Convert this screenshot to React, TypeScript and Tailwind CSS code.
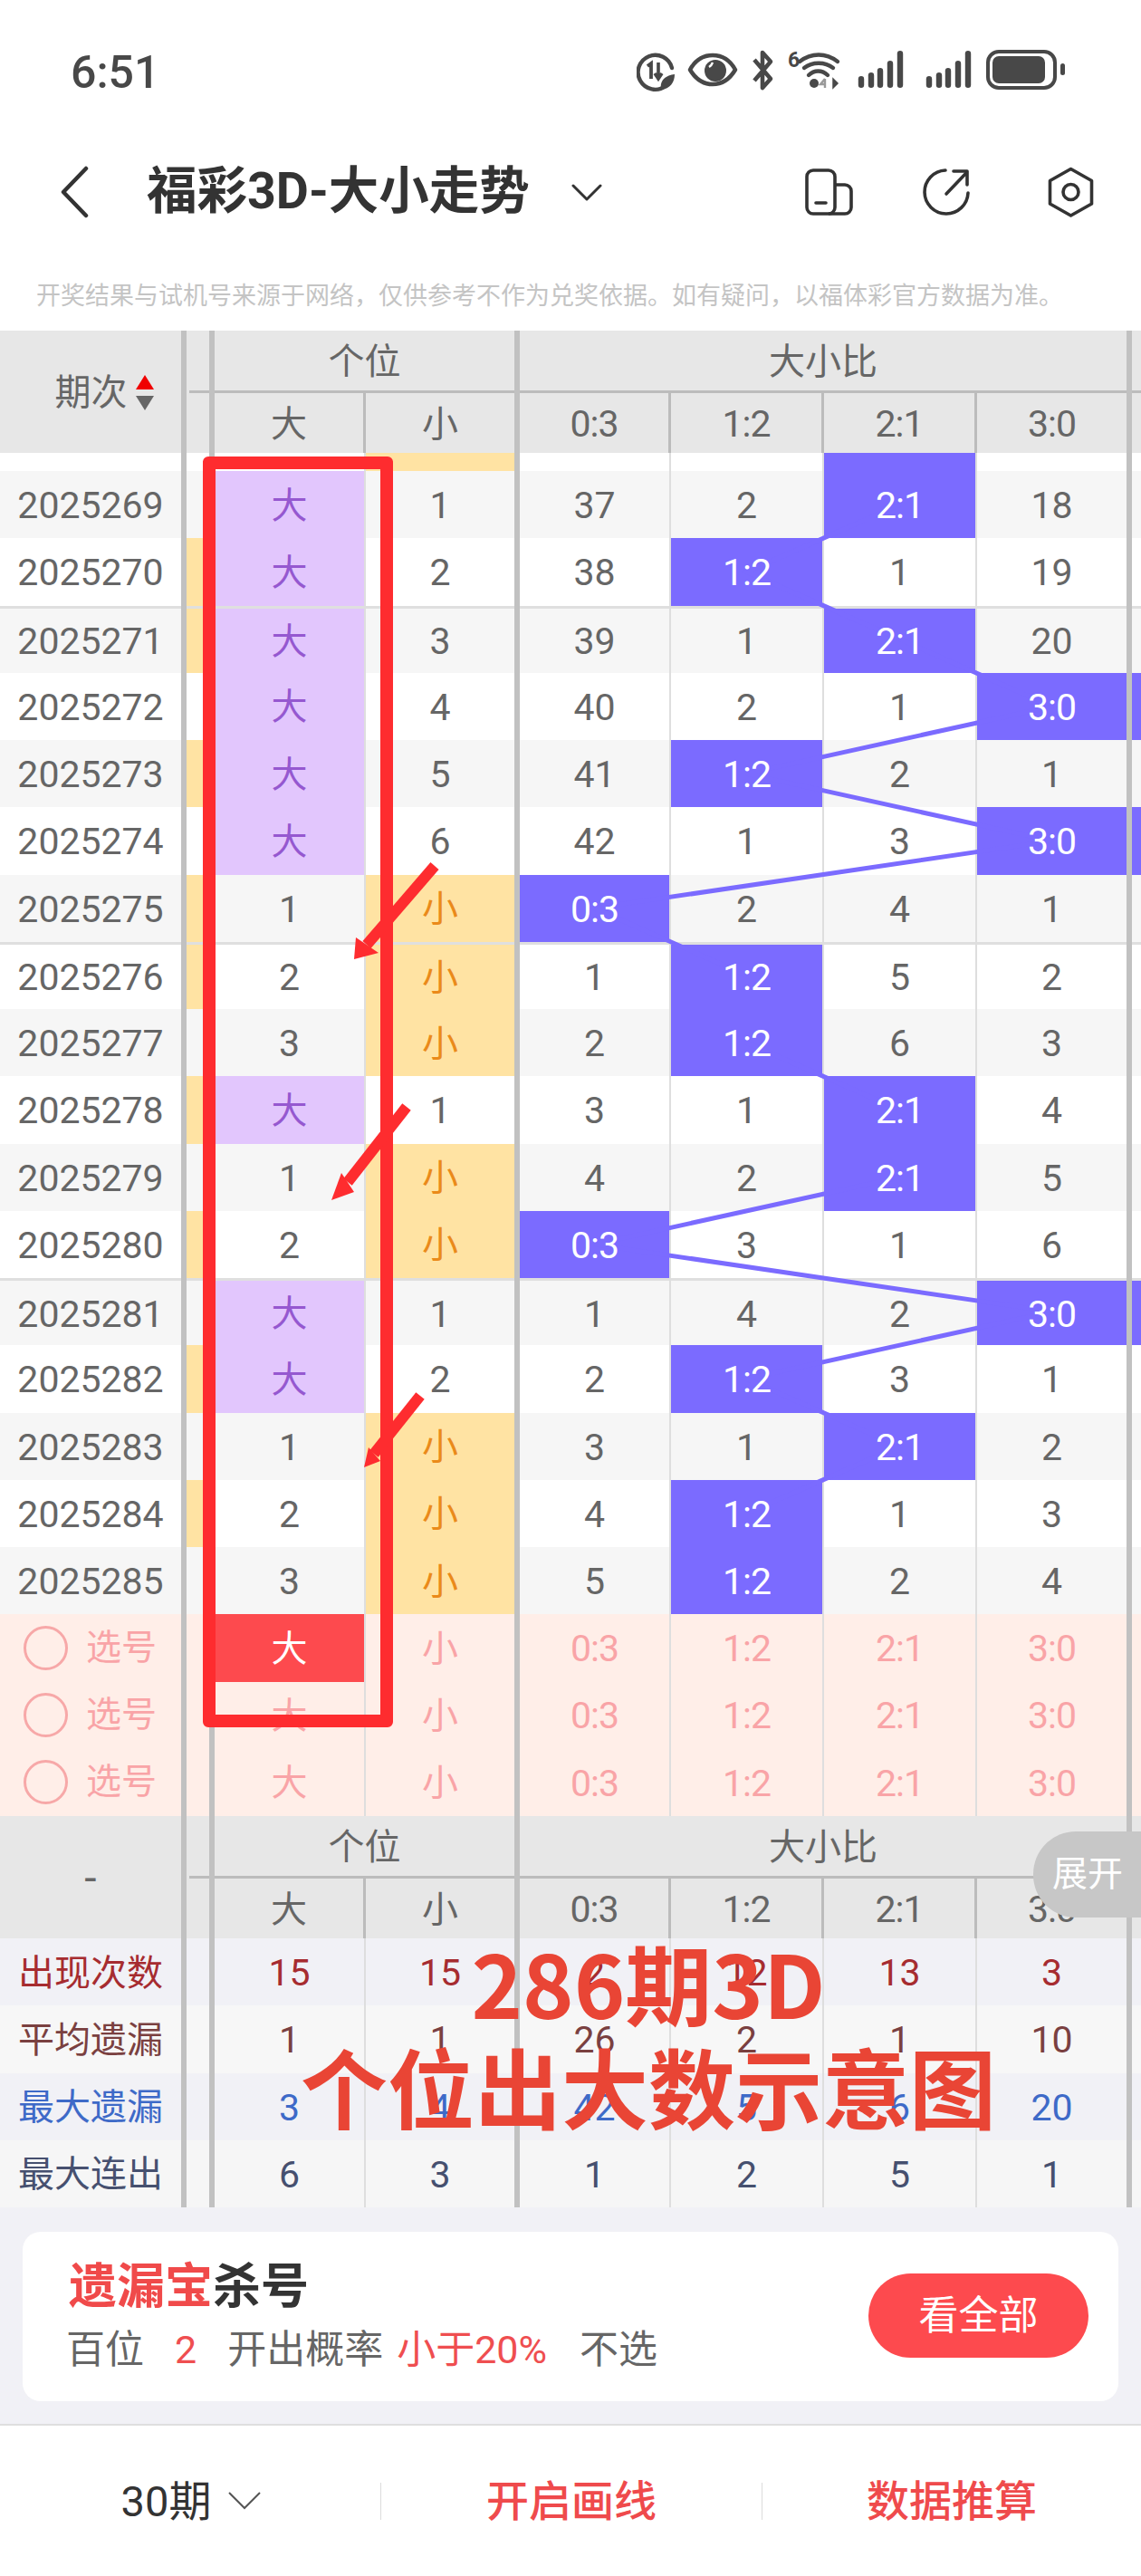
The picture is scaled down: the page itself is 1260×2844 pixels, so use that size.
const COLS = "grid grid-cols-[206px_31px_167px_170px_167px_169px_169px_171px_10px]";
const SUB_COLS = "grid grid-cols-[31px_167px_170px_167px_169px_169px_171px_10px]";

const ZEBRA = "bg-[#f6f6f6]";
const WHITE = "bg-white";
const YELLOW = "bg-[#ffe3a3]";
const PURPLE = "bg-[#e2c6fd]";
const BLUE = "bg-[#7b6bff]";

const RATIOS = ["0:3", "1:2", "2:1", "3:0"];
const RATIO_X = [656.5, 824.5, 993.5, 1161.5];
const ROW_H = 74.25;

interface Draw {
  id: number;
  big: number | null; // null = 大 came up
  small: number | null; // null = 小 came up
  mark: boolean;
  ratio: number[]; // 0 = this ratio came up
}

const draws: Draw[] = [
  { id: 2025269, big: null, small: 1, mark: false, ratio: [37, 2, 0, 18] },
  { id: 2025270, big: null, small: 2, mark: true, ratio: [38, 0, 1, 19] },
  { id: 2025271, big: null, small: 3, mark: true, ratio: [39, 1, 0, 20] },
  { id: 2025272, big: null, small: 4, mark: false, ratio: [40, 2, 1, 0] },
  { id: 2025273, big: null, small: 5, mark: true, ratio: [41, 0, 2, 1] },
  { id: 2025274, big: null, small: 6, mark: false, ratio: [42, 1, 3, 0] },
  { id: 2025275, big: 1, small: null, mark: true, ratio: [0, 2, 4, 1] },
  { id: 2025276, big: 2, small: null, mark: true, ratio: [1, 0, 5, 2] },
  { id: 2025277, big: 3, small: null, mark: false, ratio: [2, 0, 6, 3] },
  { id: 2025278, big: null, small: 1, mark: true, ratio: [3, 1, 0, 4] },
  { id: 2025279, big: 1, small: null, mark: false, ratio: [4, 2, 0, 5] },
  { id: 2025280, big: 2, small: null, mark: true, ratio: [0, 3, 1, 6] },
  { id: 2025281, big: null, small: 1, mark: false, ratio: [1, 4, 2, 0] },
  { id: 2025282, big: null, small: 2, mark: true, ratio: [2, 0, 3, 1] },
  { id: 2025283, big: 1, small: null, mark: false, ratio: [3, 1, 0, 2] },
  { id: 2025284, big: 2, small: null, mark: true, ratio: [4, 0, 1, 3] },
  { id: 2025285, big: 3, small: null, mark: false, ratio: [5, 0, 2, 4] },
];

const stats = [
  { label: "出现次数", values: [15, 15, 2, 12, 13, 3], bg: "bg-[#f1f1f6]", color: "text-[#a62c30]" },
  { label: "平均遗漏", values: [1, 1, 26, 2, 1, 10], bg: "bg-[#f7f7f7]", color: "text-[#7a4040]" },
  { label: "最大遗漏", values: [3, 4, 42, 5, 6, 20], bg: "bg-[#f1f1f6]", color: "text-[#3e6ac8]" },
  { label: "最大连出", values: [6, 3, 1, 2, 5, 1], bg: "bg-[#f6f6f6]", color: "text-[#46506f]" },
];

const Cell = ({
  edge = "thin",
  bg = "",
  line = false,
  children,
}: {
  edge?: "thin" | "sep" | "none";
  bg?: string;
  line?: boolean;
  children?: React.ReactNode;
}) => (
  <div
    className={
      edge === "sep"
        ? "border-r-[6px] border-[#c1c1c1]"
        : edge === "thin"
          ? "border-r-[2px] border-[#dedede]"
          : ""
    }
  >
    <div className={`h-full pt-[3px] flex items-center justify-center ${bg} ${line ? "border-t-[3px] border-[#dfdfdf]" : ""}`}>
      {children}
    </div>
  </div>
);

const Txt = ({ className, children }: { className: string; children: React.ReactNode }) => (
  <span className={`relative z-10 leading-none ${className}`}>{children}</span>
);

const TableHeader = ({ period }: { period: React.ReactNode }) => (
  <div className="flex h-[135px] bg-[#e7e7e7] text-[#666]">
    <div className="w-[206px] shrink-0 pt-[3px] border-r-[6px] border-[#c1c1c1] flex items-center justify-center">{period}</div>
    <div className="flex-1">
      <div className="grid grid-cols-[31px_337px_676px_10px] h-[66px]">
        <div className="border-r-[6px] border-[#c1c1c1]" />
        <div className="border-r-[6px] border-[#c1c1c1] pt-[3px] flex items-center justify-center text-[40px]">个位</div>
        <div className="border-r-[6px] border-[#c1c1c1] pt-[3px] flex items-center justify-center text-[40px]">大小比</div>
        <div />
      </div>
      <div className={`${SUB_COLS} h-[69px]`}>
        <div className="border-r-[6px] border-[#c1c1c1]">
          <div className="ml-[3px] h-[3px] bg-[#bcbcbc]" />
        </div>
        {["大", "小", ...RATIOS].map((label, i) => (
          <div
            key={label}
            className={i === 1 || i === 5 ? "border-r-[6px] border-[#c1c1c1]" : "border-r-[3px] border-[#bcbcbc]"}
          >
            <div className="h-full pt-[3px] border-t-[3px] border-[#bcbcbc] flex items-center justify-center">
              {i < 2 ? (
                <span className="text-[40px]">{label}</span>
              ) : (
                <span className="text-[41px] tracking-[-1px]">{label}</span>
              )}
            </div>
          </div>
        ))}
        <div className="border-t-[3px] border-[#bcbcbc]" />
      </div>
    </div>
  </div>
);

const StatusIcons = () => (
  <svg width="474" height="50" viewBox="703 54 474 50" fill="none">
    {/* data saver */}
    <path d="M735 96 A19 19 0 1 1 742 76" stroke="#484848" strokeWidth="4.4" strokeLinecap="round" />
    <path d="M715 74 L719 71 V88" stroke="#484848" strokeWidth="3.8" />
    <path d="M727 70 V87 M723 82 L727 88 L731 82" stroke="#484848" strokeWidth="3.6" />
    <path d="M730 100 C728 89 736 84 745 83 C745 92 740 99 730 100 Z" fill="#484848" />
    {/* eye */}
    <path d="M762 78 C768 67 777 62 787 62 C797 62 806 67 812 78 C806 88 797 94 787 94 C777 94 768 88 762 78 Z" stroke="#484848" strokeWidth="4.5" strokeLinejoin="round" />
    <circle cx="790" cy="79" r="12" fill="#484848" />
    <path d="M787 70 A10 10 0 0 1 783 75" stroke="#fff" strokeWidth="2.4" />
    {/* bluetooth */}
    <path d="M833 67 L851 88 L842 98 V59 L851 69 L833 90" stroke="#484848" strokeWidth="4.6" strokeLinejoin="round" />
    {/* wifi */}
    <text x="870" y="75" fontFamily="Roboto, sans-serif" fontWeight="700" fontSize="23" fill="#484848">6</text>
    <path d="M883 69 C896 59 912 59 925 69" stroke="#484848" strokeWidth="4.4" strokeLinecap="round" />
    <path d="M888 76 C897 69 911 69 920 76" stroke="#484848" strokeWidth="4.4" strokeLinecap="round" />
    <path d="M893 84 C899 78 908 78 914 84" stroke="#484848" strokeWidth="4.4" strokeLinecap="round" />
    <circle cx="899" cy="93" r="5" fill="#484848" />
    <path d="M911 88 V98 M911 88 L906 94 H911" stroke="#9a9a9a" strokeWidth="2.4" />
    <path d="M920 88 V98 L925 93 Z" fill="#484848" stroke="#484848" strokeWidth="1.5" />
    {/* signal, two sims */}
    {[951, 1026].map((start) =>
      [
        [0, 85],
        [11, 81],
        [21, 76],
        [32, 68],
        [43, 57],
      ].map(([dx, top]) => (
        <rect key={start + dx} x={start + dx - 3.2} y={top} width="6.4" height={98 - top} rx="3.2" fill="#484848" />
      ))
    )}
    {/* battery */}
    <rect x="1091" y="58" width="74" height="40" rx="12" stroke="#484848" strokeWidth="4" />
    <rect x="1096" y="63" width="58" height="30" rx="7" fill="#484848" />
    <rect x="1171" y="71" width="5" height="13" rx="2.5" fill="#484848" />
  </svg>
);

const App = () => {
  // blue trend line, row centres in the table body's own coordinates
  const points = draws.map((d, i) => `${RATIO_X[d.ratio.indexOf(0)]},${20 + ROW_H * i + ROW_H / 2}`).join(" ");

  return (
    <div className="relative w-[1260px] h-[2844px] overflow-hidden bg-white text-[#666] font-[family-name:Roboto,'Noto_Sans_CJK_SC',sans-serif]">
      {/* status bar */}
      <div className="h-[156px] flex items-center justify-between pl-[78px] pr-[83px] text-[#484848]">
        <span className="pt-[3px] text-[50px] font-medium leading-none">6:51</span>
        <StatusIcons />
      </div>

      {/* nav */}
      <div className="h-[112px] flex items-center pl-[66px] pr-[51px] text-[#333]">
        <svg width="32" height="58" viewBox="0 0 32 58" fill="none">
          <path d="M29 3 L4 29 L29 55" stroke="#333" strokeWidth="4.5" strokeLinecap="round" strokeLinejoin="round" />
        </svg>
        <span className="ml-[64px] text-[55.5px] font-bold leading-none whitespace-nowrap">福彩3D-大小走势</span>
        <svg className="ml-[46px]" width="34" height="20" viewBox="0 0 34 20" fill="none">
          <path d="M2 3 L17 18 L32 3" stroke="#333" strokeWidth="3" strokeLinecap="round" strokeLinejoin="round" />
        </svg>
        <div className="ml-auto flex items-center">
          <svg width="54" height="52" viewBox="890 186 54 52" fill="none" stroke="#333" strokeWidth="3.6">
            <rect x="892" y="188" width="31" height="48" rx="7" />
            <path d="M923 204 H934 A7 7 0 0 1 941 211 V229 A7 7 0 0 1 934 236 H916" />
            <path d="M902 224 H913" strokeLinecap="round" />
          </svg>
          <svg className="ml-[76px]" width="54" height="54" viewBox="1019 185 54 54" fill="none" stroke="#333" strokeWidth="3.6" strokeLinecap="round" strokeLinejoin="round">
            <path d="M1044 188 A24 24 0 1 0 1069 213" />
            <path d="M1045 214 L1067 191" />
            <path d="M1053 189 H1068 V204" />
          </svg>
          <svg className="ml-[84px]" width="52" height="56" viewBox="1157 184 52 56" fill="none" stroke="#333" strokeWidth="3.6" strokeLinejoin="round">
            <path d="M1182.5 186.5 L1205.5 199.5 V225 L1182.5 238 L1159.5 225 V199.5 Z" />
            <circle cx="1182.5" cy="212" r="8.5" />
          </svg>
        </div>
      </div>

      {/* source note */}
      <div className="h-[97px] pt-[42px] pl-[40px] text-[27px] leading-[34px] text-[#c4c4c4] whitespace-nowrap">
        开奖结果与试机号来源于网络，仅供参考不作为兑奖依据。如有疑问，以福体彩官方数据为准。
      </div>

      <TableHeader
        period={
          <div className="flex items-center gap-[9px] pl-[30px]">
            <span className="text-[40px]">期次</span>
            <svg width="20" height="40" viewBox="0 0 20 40">
              <path d="M10 0 L20 16 H0 Z" fill="#f00000" />
              <path d="M0 23 H20 L10 39 Z" fill="#666" />
            </svg>
          </div>
        }
      />

      {/* draws */}
      <div className="relative">
        <svg className="absolute left-0 top-0 z-[5]" width="1260" height="1283">
          <polyline points={points} fill="none" stroke="#7b6bff" strokeWidth="5" />
        </svg>

        {/* row cut off by the scroll */}
        <div className={`${COLS} h-[20px]`}>
          <Cell edge="sep" bg={WHITE} />
          <Cell edge="sep" bg={WHITE} />
          <Cell bg={WHITE} />
          <Cell edge="sep" bg={YELLOW} />
          <Cell bg={WHITE} />
          <Cell bg={WHITE} />
          <Cell bg={BLUE} />
          <Cell edge="sep" bg={WHITE} />
          <Cell edge="none" bg={WHITE} />
        </div>

        {draws.map((d, i) => {
          const base = i % 2 === 0 ? ZEBRA : WHITE;
          const line = i === 2 || i === 7 || i === 12;
          return (
            <div key={d.id} className={`${COLS} h-[74.25px]`}>
              <Cell edge="sep" bg={base} line={line}>
                <Txt className="text-[41px]">{d.id}</Txt>
              </Cell>
              <Cell edge="sep" bg={d.mark ? YELLOW : base} line={line} />
              <Cell bg={d.big === null ? PURPLE : base} line={line}>
                {d.big === null ? (
                  <Txt className="text-[40px] text-[#9558d0]">大</Txt>
                ) : (
                  <Txt className="text-[41px]">{d.big}</Txt>
                )}
              </Cell>
              <Cell edge="sep" bg={d.small === null ? YELLOW : base} line={line}>
                {d.small === null ? (
                  <Txt className="text-[40px] text-[#ea8a1a]">小</Txt>
                ) : (
                  <Txt className="text-[41px]">{d.small}</Txt>
                )}
              </Cell>
              {d.ratio.map((v, c) => (
                <Cell key={c} edge={c === 3 ? "sep" : "thin"} bg={v === 0 ? BLUE : base} line={line}>
                  {v === 0 ? (
                    <Txt className="text-[41px] tracking-[-1px] text-white">{RATIOS[c]}</Txt>
                  ) : (
                    <Txt className="text-[41px]">{v}</Txt>
                  )}
                </Cell>
              ))}
              <Cell edge="none" bg={d.ratio[3] === 0 ? BLUE : base} line={line} />
            </div>
          );
        })}

        {/* pick rows */}
        {[0, 1, 2].map((i) => (
          <div key={i} className={`${COLS} h-[74.25px] text-[#f9a4a7]`}>
            <div className="border-r-[6px] border-[#c1c1c1] bg-[#ffeee8] flex items-center pl-[26px]">
              <span className="w-[49px] h-[49px] rounded-full border-[3px] border-[#f7a8a8]" />
              <span className="ml-[20px] text-[39px] leading-none">选号</span>
            </div>
            <Cell edge="sep" bg="bg-[#ffeee8]" />
            <Cell bg={i === 0 ? "bg-[#fd4a4e]" : "bg-[#ffeee8]"}>
              <span className={i === 0 ? "text-[40px] text-white" : "text-[40px]"}>大</span>
            </Cell>
            <Cell edge="sep" bg="bg-[#ffeee8]">
              <span className="text-[40px]">小</span>
            </Cell>
            {RATIOS.map((r, c) => (
              <Cell key={r} edge={c === 3 ? "sep" : "thin"} bg="bg-[#ffeee8]">
                <span className="text-[41px] tracking-[-1px]">{r}</span>
              </Cell>
            ))}
            <Cell edge="none" bg="bg-[#ffeee8]" />
          </div>
        ))}
      </div>

      <TableHeader period={<span className="text-[48px] leading-none">-</span>} />

      {/* stats */}
      {stats.map((s) => (
        <div key={s.label} className={`${COLS} h-[74.25px] ${s.color}`}>
          <Cell edge="sep" bg={s.bg}>
            <span className="text-[40px] leading-none">{s.label}</span>
          </Cell>
          <Cell edge="sep" bg={s.bg} />
          {s.values.map((v, c) => (
            <Cell key={c} edge={c === 1 || c === 5 ? "sep" : "thin"} bg={s.bg}>
              <span className="text-[41px] leading-none">{v}</span>
            </Cell>
          ))}
          <Cell edge="none" bg={s.bg} />
        </div>
      ))}

      {/* kill number card */}
      <div className="h-[241px] pt-[27px] px-[25px] bg-[#f1f1f6] border-b-[2px] border-[#dedede]">
        <div className="h-[187px] rounded-[20px] bg-white flex items-center justify-between pl-[48px] pr-[33px]">
          <div>
            <div className="ml-[3px] text-[53px] font-bold leading-none">
              <span className="text-[#f04a4a]">遗漏宝</span>
              <span className="text-[#333]">杀号</span>
            </div>
            <div className="mt-[21px] flex items-center text-[43px] leading-none text-[#666] whitespace-nowrap">
              <span>百位</span>
              <span className="ml-[34px] text-[#ef4e50]">2</span>
              <span className="ml-[34px]">开出概率</span>
              <span className="ml-[15px] text-[#ef4e50]">小于20%</span>
              <span className="ml-[36px]">不选</span>
            </div>
          </div>
          <div className="w-[243px] h-[93px] -mt-[2px] rounded-full bg-[#fd4a4e] text-white text-[44px] flex items-center justify-center">
            看全部
          </div>
        </div>
      </div>

      {/* bottom bar */}
      <div className="grid grid-cols-[421px_421px_418px] h-[166px] items-center text-[47px] leading-none">
        <div className="flex items-center justify-center gap-[19px] pl-[2px] h-[41px] border-r border-[#dcdcdc] text-[#333]">
          <span>30期</span>
          <svg width="36" height="20" viewBox="0 0 36 20" fill="none">
            <path d="M1 1 L18 18 L35 1" stroke="#555" strokeWidth="2" />
          </svg>
        </div>
        <div className="flex items-center justify-center h-[41px] border-r border-[#dcdcdc] font-medium text-[#ef4a4c]">开启画线</div>
        <div className="flex items-center justify-center h-[41px] font-medium text-[#ef4a4c]">数据推算</div>
      </div>

      {/* annotations on top of the screenshot */}
      <div className="absolute left-[224px] top-[504px] w-[210px] h-[1403px] z-20 rounded-[6px] border-[14px] border-[#fe2c2f]" />
      <svg className="absolute left-0 top-0 z-20" width="1260" height="2844">
        <path d="M480 956 L405 1043" stroke="#fe2c2f" strokeWidth="12" />
        <polygon points="391,1059 393,1035 418,1052" fill="#fe2c2f" />
        <path d="M449 1222 L384 1305" stroke="#fe2c2f" strokeWidth="12" />
        <polygon points="366,1325 377,1295 391,1316" fill="#fe2c2f" />
        <path d="M464 1541 L413 1605" stroke="#fe2c2f" strokeWidth="12" />
        <polygon points="402,1620 407,1598 420,1613" fill="#fe2c2f" />
      </svg>
      <div className="absolute left-[1141px] top-[2022px] w-[119px] h-[95px] z-20 rounded-l-[47px] bg-[#c7c7c7] text-white text-[39px] flex items-center pl-[21px]">
        展开
      </div>
      <div className="absolute left-[316px] top-[2131px] w-[800px] z-30 flex flex-col items-center text-[96px] font-bold leading-[114px] text-[#e94535] font-[family-name:'Noto_Sans_CJK_SC',sans-serif]">
        <span>286期3D</span>
        <span>个位出大数示意图</span>
      </div>
    </div>
  );
};

export default App;
